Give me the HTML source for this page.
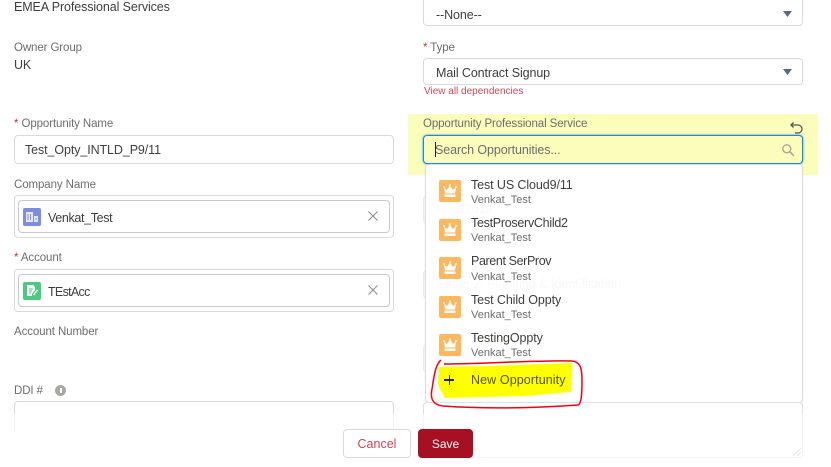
<!DOCTYPE html>
<html><head><meta charset="utf-8"><style>
html,body{margin:0;padding:0;background:#fff}
body{width:831px;height:467px;position:relative;overflow:hidden;font-family:"Liberation Sans",sans-serif;color:#3e3e3c}
.a{position:absolute;white-space:nowrap}
.l{font-size:11.500px;letter-spacing:-.1px;color:#6b6d70;line-height:14px}
.v{font-size:12.500px;letter-spacing:-.1px;line-height:16px;color:#3e3e3c}
.r{color:#c23934}
.b{position:absolute;box-sizing:border-box;background:#fff;border:1px solid #d9d9d9;border-radius:4px}
.ic{position:absolute;left:439px;width:22px;height:22px;background:#fdb75d;border-radius:2px}
.ic svg{position:absolute;left:4px;top:4px}
.n{position:absolute;left:471px;font-size:12.500px;letter-spacing:-.1px;line-height:16px;color:#3e3e3c;white-space:nowrap}
.s{position:absolute;left:471px;font-size:11px;line-height:14px;color:#6b6d70;white-space:nowrap}
</style></head><body>
<div class="a v" style="left:14px;top:-1px">EMEA Professional Services</div>
<div class="a l" style="left:14px;top:41px">Owner Group</div>
<div class="a v" style="left:14px;top:57px">UK</div>
<div class="a l" style="left:14px;top:117px"><span class="r">*</span> Opportunity Name</div>
<div class="b" style="left:14px;top:135px;width:380px;height:29px"></div>
<div class="a v" style="left:25px;top:142px">Test_Opty_INTLD_P9/11</div>
<div class="a l" style="left:14px;top:178px">Company Name</div>
<div class="b" style="left:14px;top:195px;width:380px;height:43px"></div>
<div class="b" style="left:18px;top:200px;width:372px;height:33px;border-color:#c9c9c9"></div>
<div class="a" style="left:23px;top:208px;width:18px;height:18px;background:#7f8de1;border-radius:2px"><svg width="18" height="18" viewBox="0 0 18 18"><path d="M3 4h7v10H3zM11 8h4v6h-4z" fill="#fff" opacity=".8"/><path d="M5 6v6M7.500 6v6M13 10v2" stroke="#7f8de1" stroke-width="1"/></svg></div>
<div class="a v" style="left:48px;top:210px;letter-spacing:-.35px">Venkat_Test</div>
<svg class="a" style="left:367px;top:210px" width="12" height="12" viewBox="0 0 12 12"><path d="M1.500 1.500l9 9M10.500 1.500l-9 9" stroke="#8a8a8a" stroke-width="1"/></svg>
<div class="a l" style="left:14px;top:251px"><span class="r">*</span> Account</div>
<div class="b" style="left:14px;top:269px;width:380px;height:43px"></div>
<div class="b" style="left:18px;top:274px;width:372px;height:33px;border-color:#c9c9c9"></div>
<div class="a" style="left:23px;top:282px;width:18px;height:18px;background:#4bca81;border-radius:2px"><svg width="18" height="18" viewBox="0 0 18 18"><path d="M4 3h6l2 2v3l-3 4v2H4z" fill="#fff"/><path d="M6 7h4M6 9h3M6 11h2" stroke="#4bca81" stroke-width="1"/><path d="M10.500 13l4-5" stroke="#fff" stroke-width="1.500"/></svg></div>
<div class="a v" style="left:48px;top:284px;letter-spacing:-.7px">TEstAcc</div>
<svg class="a" style="left:367px;top:284px" width="12" height="12" viewBox="0 0 12 12"><path d="M1.500 1.500l9 9M10.500 1.500l-9 9" stroke="#8a8a8a" stroke-width="1"/></svg>
<div class="a l" style="left:14px;top:325px">Account Number</div>
<div class="a l" style="left:14px;top:384px">DDI #</div>
<div class="a" style="left:55px;top:385px;width:11px;height:11px;border-radius:50%;background:#a8a7a3"><div style="position:absolute;left:5px;top:3px;width:1.500px;height:5px;background:#fff"></div></div>
<div class="b" style="left:14px;top:401px;width:380px;height:40px"></div>

<div class="b" style="left:423px;top:-3px;width:380px;height:29px"></div>
<div class="a v" style="left:436px;top:7px">--None--</div>
<svg class="a" style="left:783px;top:11px" width="9" height="6"><path d="M0 0h9L4.500 6z" fill="#54698d"/></svg>
<div class="a l" style="left:423px;top:41px"><span class="r">*</span> Type</div>
<div class="b" style="left:423px;top:58px;width:380px;height:27px"></div>
<div class="a v" style="left:436px;top:65px">Mail Contract Signup</div>
<svg class="a" style="left:783px;top:69px" width="9" height="6"><path d="M0 0h9L4.500 6z" fill="#54698d"/></svg>
<div class="a" style="left:424px;top:85px;font-size:10px;line-height:14px;color:#c9475a">View all dependencies</div>

<div class="b" style="left:423px;top:195px;width:380px;height:29px;background:#f7f7f7;border-color:#ececec"></div>
<div class="b" style="left:423px;top:270px;width:380px;height:29px;background:#f7f7f7;border-color:#ececec"></div>
<div class="b" style="left:423px;top:344px;width:380px;height:29px;background:#f7f7f7;border-color:#ececec"></div>

<div class="a" style="left:408px;top:114px;width:410px;height:61px;background:#fbfdbb"></div>
<div class="a l" style="left:423px;top:117px">Opportunity Professional Service</div>
<svg class="a" style="left:789px;top:121px" width="15" height="14" viewBox="0 0 15 14"><path d="M4.500 1.500L2 4l2.500 2.500M2.500 4H9a3.500 3.500 0 0 1 0 8H6" fill="none" stroke="#54585c" stroke-width="1.300"/></svg>
<div class="b" style="left:423px;top:135px;width:380px;height:29px;background:#fbfdbb;border-color:#1589ee;box-shadow:0 0 2px #1589ee"></div>
<div class="a" style="left:435px;top:142px;width:1px;height:15px;background:#222"></div>
<div class="a v" style="left:435px;top:142px;color:#6b6d70">Search Opportunities...</div>
<svg class="a" style="left:781px;top:143px" width="14" height="14" viewBox="0 0 14 14"><circle cx="5.800" cy="5.800" r="4" fill="none" stroke="#a5a5a0" stroke-width="1.300"/><path d="M8.800 8.800l4 4" stroke="#a5a5a0" stroke-width="1.500"/></svg>

<div class="b" style="left:425px;top:164px;width:378px;height:239px;border-color:#dcdcdc;box-shadow:0 1px 2px rgba(0,0,0,.05)"></div>
<div class="a" style="left:437px;top:201px;font-size:12.500px;line-height:16px;color:#f8f8f8">9/21/2019</div>
<div class="a" style="left:437px;top:276px;font-size:12.500px;line-height:16px;color:#f8f8f8">Stage 2: Planning &amp; Identification</div>

<div class="ic" style="top:180px"><svg width="14" height="14" viewBox="0 0 14 14"><circle cx="1" cy="3" r="1" fill="#fff"/><circle cx="7" cy="1" r="1" fill="#fff"/><circle cx="13" cy="3" r="1" fill="#fff"/><path d="M1 3.500l3 2.500 3-4.500 3 4.500 3-2.500-1 6H2zM1.500 10.500h11V13h-11z" fill="#fff"/></svg></div>
<div class="n" style="top:177px">Test US Cloud9/11</div><div class="s" style="top:193px">Venkat_Test</div>
<div class="ic" style="top:219px"><svg width="14" height="14" viewBox="0 0 14 14"><circle cx="1" cy="3" r="1" fill="#fff"/><circle cx="7" cy="1" r="1" fill="#fff"/><circle cx="13" cy="3" r="1" fill="#fff"/><path d="M1 3.500l3 2.500 3-4.500 3 4.500 3-2.500-1 6H2zM1.500 10.500h11V13h-11z" fill="#fff"/></svg></div>
<div class="n" style="top:215px;letter-spacing:-.28px">TestProservChild2</div><div class="s" style="top:231px">Venkat_Test</div>
<div class="ic" style="top:257px"><svg width="14" height="14" viewBox="0 0 14 14"><circle cx="1" cy="3" r="1" fill="#fff"/><circle cx="7" cy="1" r="1" fill="#fff"/><circle cx="13" cy="3" r="1" fill="#fff"/><path d="M1 3.500l3 2.500 3-4.500 3 4.500 3-2.500-1 6H2zM1.500 10.500h11V13h-11z" fill="#fff"/></svg></div>
<div class="n" style="top:253px;letter-spacing:-.38px">Parent SerProv</div><div class="s" style="top:270px">Venkat_Test</div>
<div class="ic" style="top:296px"><svg width="14" height="14" viewBox="0 0 14 14"><circle cx="1" cy="3" r="1" fill="#fff"/><circle cx="7" cy="1" r="1" fill="#fff"/><circle cx="13" cy="3" r="1" fill="#fff"/><path d="M1 3.500l3 2.500 3-4.500 3 4.500 3-2.500-1 6H2zM1.500 10.500h11V13h-11z" fill="#fff"/></svg></div>
<div class="n" style="top:292px">Test Child Oppty</div><div class="s" style="top:308px">Venkat_Test</div>
<div class="ic" style="top:334px"><svg width="14" height="14" viewBox="0 0 14 14"><circle cx="1" cy="3" r="1" fill="#fff"/><circle cx="7" cy="1" r="1" fill="#fff"/><circle cx="13" cy="3" r="1" fill="#fff"/><path d="M1 3.500l3 2.500 3-4.500 3 4.500 3-2.500-1 6H2zM1.500 10.500h11V13h-11z" fill="#fff"/></svg></div>
<div class="n" style="top:330px">TestingOppty</div><div class="s" style="top:346px">Venkat_Test</div>

<div class="b" style="left:423px;top:402px;width:380px;height:56px;border-color:#e0e0e0"></div>
<svg class="a" style="left:792px;top:447px" width="10" height="10"><path d="M1 9L9 1M5 9L9 5" stroke="#b9b9b9" stroke-width="1"/></svg>
<div class="a" style="left:0;top:414px;width:831px;height:53px;background:rgba(255,255,255,.65)"></div>
<div class="a" style="left:0;top:430px;width:400px;height:37px;background:#fff"></div>

<svg class="a" style="left:425px;top:355px" width="170" height="60" viewBox="0 0 170 60"><path d="M14 12L60 11L147 8L146 37L100 41L60 42L20 43L13 30z" fill="#ffff00"/><path d="M16 5C10 10 9 22 7 34C5 44 8 50 18 51C60 54 110 53 153 50C156 49 157 42 157 25C157 12 155 7 147 6C110 5 60 9 19 9" fill="none" stroke="#f5000f" stroke-width="1.500"/></svg>
<div class="a" style="left:444px;top:379px;width:10px;height:1.500px;background:#222"></div>
<div class="a" style="left:448.500px;top:375px;width:1.500px;height:10px;background:#222"></div>
<div class="n" style="top:372px;color:#53530c;letter-spacing:.1px">New Opportunity</div>

<div class="b" style="left:343px;top:429px;width:68px;height:29px;border-color:#d9d9d9;color:#c9475a;font-size:12.500px;line-height:28px;text-align:center">Cancel</div>
<div class="b" style="left:418px;top:429px;width:55px;height:29px;background:#a61022;border-color:#a61022;color:#fff;font-size:12px;line-height:28px;text-align:center">Save</div>
</body></html>
